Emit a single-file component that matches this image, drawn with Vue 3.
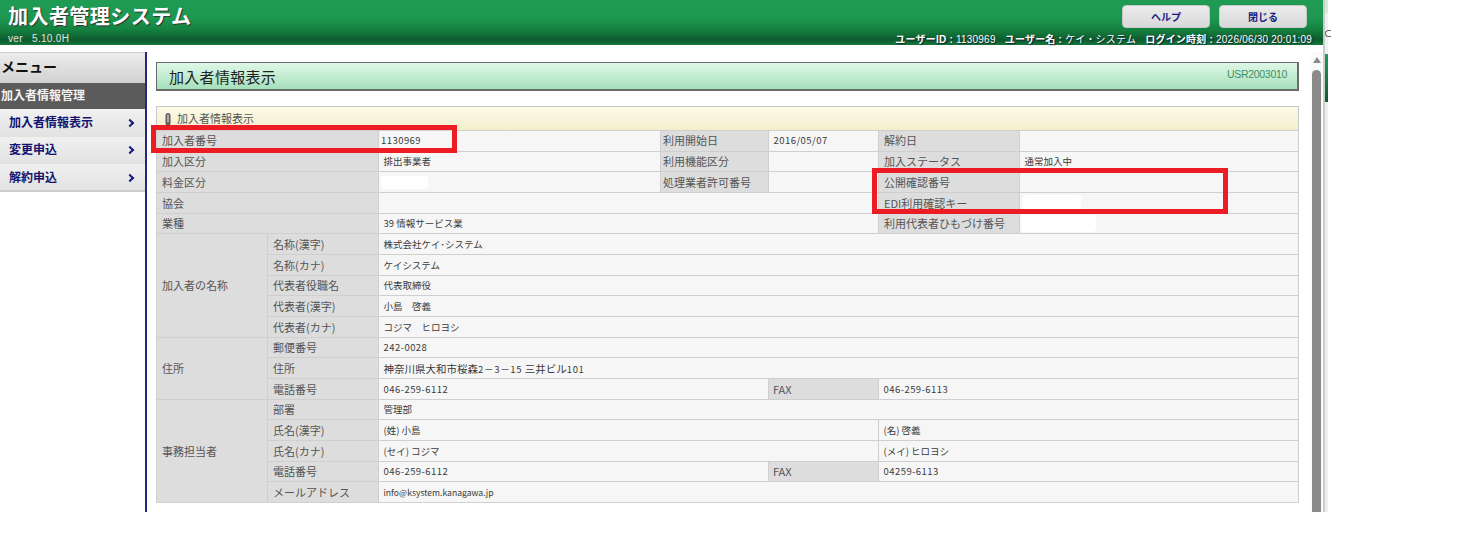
<script setup>
</script>

<template>
  <div class="page">
    <div class="window">
      <header class="header">
        <div class="brand">
          <div class="sys">加入者管理システム</div>
          <div class="ver">ver&nbsp;&nbsp; 5.10.0H</div>
        </div>
        <div class="head-right">
          <div class="btns">
            <button class="btn">ヘルプ</button>
            <button class="btn">閉じる</button>
          </div>
          <div class="userinfo">
            <b>ユーザーID :</b> 1130969 &nbsp;&nbsp;<b>ユーザー名 :</b> ケイ・システム &nbsp;&nbsp;<b>ログイン時刻 :</b> 2026/06/30 20:01:09
          </div>
        </div>
      </header>
      <div class="body">
        <aside class="side">
          <div class="menu-title">メニュー</div>
          <div class="menu-group">加入者情報管理</div>
          <a class="menu-item">加入者情報表示<span class="chev"></span></a>
          <a class="menu-item">変更申込<span class="chev"></span></a>
          <a class="menu-item">解約申込<span class="chev"></span></a>
        </aside>
        <main class="main">
          <div class="content">
            <div class="title-bar">
              <h1>加入者情報表示</h1>
              <span class="code">USR2003010</span>
            </div>
            <div class="panel-head">
              <svg class="clip" width="6" height="14" viewBox="0 0 6 14"><rect x="0.5" y="1" width="5" height="12.5" rx="2.5" fill="#5c5c5c" /><rect x="2.3" y="2.5" width="1.4" height="8" fill="#cfcfcf" /></svg>
              加入者情報表示
            </div>
            <table class="info">
              <colgroup>
                <col class="c1" /><col class="c2" /><col class="c3" /><col class="c4" /><col class="c5" /><col class="c6" /><col class="c7" />
              </colgroup>
              <tbody>
                <tr class="first">
                  <th colspan="2">加入者番号</th><td class="num tight">1130969</td>
                  <th class="near">利用開始日</th><td class="num">2016/05/07</td>
                  <th>解約日</th><td></td>
                </tr>
                <tr>
                  <th colspan="2">加入区分</th><td>排出事業者</td>
                  <th class="near">利用機能区分</th><td></td>
                  <th>加入ステータス</th><td>通常加入中</td>
                </tr>
                <tr>
                  <th colspan="2">料金区分</th><td><span class="redact r1"></span></td>
                  <th class="near">処理業者許可番号</th><td></td>
                  <th>公開確認番号</th><td></td>
                </tr>
                <tr>
                  <th colspan="2">協会</th><td colspan="3"></td>
                  <th>EDI利用確認キー</th><td><span class="redact r2"></span></td>
                </tr>
                <tr>
                  <th colspan="2">業種</th><td colspan="3">39 情報サービス業</td>
                  <th>利用代表者ひもづけ番号</th><td><span class="redact r3"></span></td>
                </tr>
                <tr>
                  <th rowspan="5">加入者の名称</th><th>名称(漢字)</th><td colspan="5">株式会社ケイ･システム</td>
                </tr>
                <tr><th>名称(カナ)</th><td colspan="5">ケイシステム</td></tr>
                <tr><th>代表者役職名</th><td colspan="5">代表取締役</td></tr>
                <tr><th>代表者(漢字)</th><td colspan="5">小島　啓義</td></tr>
                <tr><th>代表者(カナ)</th><td colspan="5">コジマ　ヒロヨシ</td></tr>
                <tr>
                  <th rowspan="3">住所</th><th>郵便番号</th><td colspan="5" class="num">242-0028</td>
                </tr>
                <tr><th>住所</th><td colspan="5" class="addr">神奈川県大和市桜森<span class="wide">2－3－15</span> 三井ビル<span class="wide">101</span></td></tr>
                <tr>
                  <th>電話番号</th><td colspan="2" class="num">046-259-6112</td>
                  <th class="fax">FAX</th><td colspan="2" class="num">046-259-6113</td>
                </tr>
                <tr>
                  <th rowspan="5">事務担当者</th><th>部署</th><td colspan="5">管理部</td>
                </tr>
                <tr>
                  <th>氏名(漢字)</th><td colspan="3">(姓) 小島</td><td colspan="2">(名) 啓義</td>
                </tr>
                <tr>
                  <th>氏名(カナ)</th><td colspan="3">(セイ) コジマ</td><td colspan="2">(メイ) ヒロヨシ</td>
                </tr>
                <tr>
                  <th>電話番号</th><td colspan="2" class="num">046-259-6112</td>
                  <th class="fax">FAX</th><td colspan="2" class="num">04259-6113</td>
                </tr>
                <tr><th>メールアドレス</th><td colspan="5" class="mail">info@ksystem.kanagawa.jp</td></tr>
              </tbody>
            </table>
          </div>
          <div class="scrollbar">
            <span class="arrow"></span>
            <span class="thumb"></span>
          </div>
        </main>
      </div>
    </div>
    <div class="strip">
      <span class="strip-top"></span>
      <span class="strip-c"></span>
      <span class="strip-green"></span>
    </div>
    <div class="mark m1"></div>
    <div class="mark m2"></div>
  </div>
</template>

<style>
html, body { margin: 0; background: #fff; }
</style>

<style scoped>
.page {
  position: relative;
  display: flex;
  width: 1477px;
  height: 541px;
  overflow: hidden;
  background: #fff;
  font-family: "Liberation Sans", "Noto Sans CJK JP", sans-serif;
  color: #333;
}
.window { width: 1323px; height: 512px; display: flex; flex-direction: column; }
.header {
  height: 45px;
  flex: none;
  display: flex;
  justify-content: space-between;
  background: linear-gradient(#1f9b54 0, #1e9851 18px, #14803f 30px, #0d5a2e 40px, #16783c 45px);
  color: #fff;
}
.brand { padding-left: 8px; }
.sys {
  font-family: "Noto Sans CJK JP", sans-serif;
  font-size: 20px;
  font-weight: 700;
  line-height: 20px;
  letter-spacing: .45px;
  padding-top: 6px;
  text-shadow: 1px 1px 1px #333;
}
.ver { font-size: 10px; line-height: 12px; margin-top: 7px; color: #e2e2e2; letter-spacing: .3px; }
.head-right { display: flex; flex-direction: column; align-items: flex-end; padding-right: 11px; }
.btns { display: flex; gap: 9px; padding: 5px 5px 0 0; }
.btn {
  width: 88px;
  height: 23px;
  padding: 0;
  border: 1px solid #c8c8c8;
  border-radius: 4px;
  background: linear-gradient(#ebebeb, #d9d9d9);
  color: #1a1a80;
  font: 700 10px "Noto Sans CJK JP", sans-serif;
}
.userinfo {
  font: 10px/12px "Liberation Sans", "Noto Sans CJK JP", sans-serif;
  letter-spacing: .22px;
  margin-top: 6px;
  white-space: nowrap;
  text-shadow: 1px 1px 1px #123;
}
.body { flex: 1; min-height: 0; display: flex; padding-top: 7px; }
.side {
  width: 145px;
  flex: none;
  border-right: 2px solid #26267a;
  font-family: "Noto Sans CJK JP", sans-serif;
}
.menu-title {
  height: 31px;
  line-height: 27px;
  padding-left: 1px;
  font-size: 14px;
  font-weight: 700;
  color: #111;
  background: linear-gradient(#ececec, #d2d2d2);
  border-top: 1px solid #ccc;
  box-sizing: border-box;
}
.menu-group {
  height: 26px;
  line-height: 24px;
  padding-left: 1px;
  font-size: 12px;
  font-weight: 700;
  color: #f2f2f2;
  background: #5b5b5b;
}
.menu-item {
  display: flex;
  align-items: center;
  justify-content: space-between;
  height: 27.5px;
  padding: 0 12.5px 3px 9px;
  box-sizing: border-box;
  font-size: 12px;
  font-weight: 700;
  color: #14146e;
  background: linear-gradient(#f0f0f0, #e2e2e2);
}
.menu-item:last-of-type { border-bottom: 2px solid #ccc; height: 28px; padding-bottom: 1px; }
.chev {
  width: 4px;
  height: 4px;
  margin-top: 3px;
  border-top: 2px solid #1c1c80;
  border-right: 2px solid #1c1c80;
  transform: rotate(45deg);
}
.main { flex: 1; display: flex; min-width: 0; }
.content { width: 1143px; margin-left: 9px; padding-top: 10px; }
.title-bar {
  height: 29px;
  box-sizing: border-box;
  border: 1px solid #6b6b6b;
  border-width: 1px 2px 2px 1px;
  display: flex;
  justify-content: space-between;
  padding: 0 10px 0 12px;
  background: linear-gradient(#dff8e6, #a6e0bb);
}
h1 {
  margin: 0;
  font: 400 15px/28px "Noto Sans CJK JP", sans-serif;
  letter-spacing: .3px;
  color: #222;
}
.code { font-size: 10.5px; line-height: 22px; letter-spacing: -.3px; color: #3f8f65; }
.panel-head {
  height: 24px;
  margin-top: 15px;
  box-sizing: border-box;
  padding: 0 0 2px 8px;
  display: flex;
  align-items: center;
  gap: 6px;
  font: 11px "Noto Sans CJK JP", sans-serif;
  color: #555;
  border: 1px solid #c8c8c8;
  border-bottom: none;
  background: linear-gradient(#fdfbe9, #f4eecb);
}
.clip { margin-top: 3px; }
.info {
  width: 1142px;
  height: 372px;
  table-layout: fixed;
  border-collapse: collapse;
  font-family: "Noto Sans CJK JP", sans-serif;
}
.c1 { width: 111px; }
.c2 { width: 111px; }
.c3 { width: 282px; }
.c4 { width: 108px; }
.c5 { width: 110px; }
.c6 { width: 141px; }
.c7 { width: 279px; }
th, td {
  height: 20.66px;
  box-sizing: border-box;
  border: 1px solid #cfcfcf;
  padding: 0 5px 0 4.5px;
  text-align: left;
  white-space: nowrap;
  overflow: hidden;
}
.first th, .first td { padding-bottom: 2px; }
th {
  background: #dddddd;
  font-size: 11px;
  font-weight: 400;
  color: #555;
  padding-left: 5px;
}
th.near { padding-left: 2px; }
th.fax { padding-left: 4px; }
td { background: #f6f6f6; font-size: 9.5px; color: #3a3a3a; }
.num { letter-spacing: .45px; }
td.tight { padding-left: 2px; }
.addr { font-size: 10.5px; }
.wide { letter-spacing: .7px; font-size: 9.5px; }
.mail { font-size: 8.6px; }
.redact { display: block; background: #fff; border-radius: 4px; }
.r1 { width: 47px; height: 13px; margin-left: -3px; }
.r2 { width: 58px; height: 15px; margin-left: -2px; }
.r3 { width: 75px; height: 17px; margin-left: -4px; }
.scrollbar {
  width: 11px;
  margin-left: 12px;
  display: flex;
  flex-direction: column;
  align-items: center;
  background: #fafafa;
}
.arrow {
  margin-top: 5px;
  width: 0;
  height: 0;
  border-left: 4.5px solid transparent;
  border-right: 4.5px solid transparent;
  border-bottom: 6px solid #8a8a8a;
}
.thumb {
  width: 9px;
  flex: 1;
  margin-top: 7px;
  background: #8a8a8a;
  border-radius: 5px 5px 0 0;
}
.strip {
  position: relative;
  width: 5px;
  height: 512px;
  box-sizing: border-box;
  border-left: 2px solid #cccccc;
  background: #eef1f1;
}
.strip-top { position: absolute; left: 0; top: 0; width: 3px; height: 13px; background: #d3ecd9; }
.strip-c {
  position: absolute;
  left: 0;
  top: 30px;
  width: 6px;
  height: 7px;
  box-sizing: border-box;
  border: 1px solid #667;
  border-right: none;
  border-radius: 4px 0 0 4px;
  background: #fff;
}
.strip-green { position: absolute; left: 0; top: 54px; width: 3px; height: 48px; background: linear-gradient(#1f9b54, #0e5a2e); }
.mark { position: absolute; border: 5px solid #ed1c24; box-sizing: border-box; }
.m1 { left: 151px; top: 125px; width: 306px; height: 28px; }
.m2 { left: 872px; top: 168px; width: 356px; height: 46px; }
</style>
